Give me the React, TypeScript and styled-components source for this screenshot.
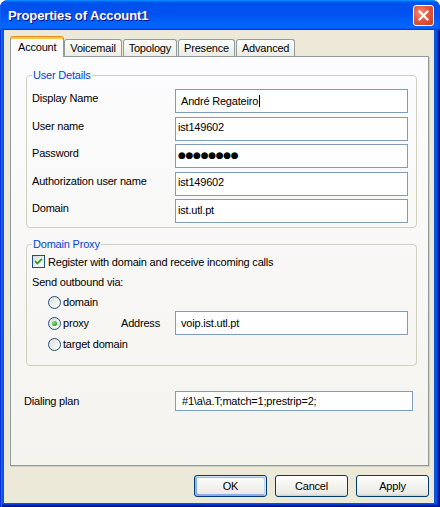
import React from 'react';
import styled, { createGlobalStyle } from 'styled-components';

const GlobalStyle = createGlobalStyle`
  html, body { margin: 0; padding: 0; }
  body {
    width: 440px;
    height: 507px;
    overflow: hidden;
    font-family: Tahoma, "Liberation Sans", Arial, sans-serif;
    font-size: 11px;
    letter-spacing: -0.2px;
    color: #000;
  }
  * { box-sizing: border-box; }
`;

const Window = styled.div`
  width: 440px;
  height: 507px;
  display: flex;
  flex-direction: column;
  background: #0855dd;
  border-radius: 8px 8px 0 0;
  overflow: hidden;
`;

const TitleBar = styled.div`
  height: 30px;
  flex: none;
  display: flex;
  align-items: center;
  justify-content: space-between;
  padding: 1px 6px 0 8px;
  background: linear-gradient(180deg, #0997ff, #0053ee 8%, #0050ee 40%, #0066ff 88%, #0066ff 93%, #005bff 95%, #003dd7 96%, #003dd7);
  box-shadow: inset 1px 0 #0b62f4, inset -1px 0 #0b4fd8;
`;

const Title = styled.span`
  color: #fff;
  font: bold 13px "Liberation Sans", Arial, sans-serif;
  letter-spacing: -0.1px;
  text-shadow: 1px 1px #0f1089;
`;

const CloseButton = styled.div`
  width: 21px;
  height: 21px;
  border: 1px solid #fff;
  border-radius: 3px;
  display: flex;
  align-items: center;
  justify-content: center;
  background: radial-gradient(circle at 35% 35%, #f0917a 0%, #e05a3c 45%, #d4472a 80%, #c03a1c 100%);
`;

const Frame = styled.div`
  flex: 1;
  display: flex;
  padding: 0 6px 4px 4px;
  background: #0855dd;
  box-shadow: inset 1px 0 #0831d9, inset 2px 0 #166aee, inset -1px -1px #00138c,
    inset -2px -2px #001ea0, inset -3px -3px #003bda;
`;

const Client = styled.div`
  flex: 1;
  display: flex;
  flex-direction: column;
  padding: 6px 5px 6px 6px;
  background: #ece9d8;
`;

const TabStrip = styled.div`
  display: flex;
  align-items: flex-end;
  gap: 1px;
  height: 21px;
  margin-bottom: -1px;
  position: relative;
  z-index: 1;
`;

const Tab = styled.div<{ $active?: boolean }>`
  display: flex;
  align-items: center;
  border: 1px solid #919b9c;
  border-bottom: none;
  border-radius: 3px 3px 0 0;
  white-space: nowrap;
  height: ${p => (p.$active ? '21px' : '17px')};
  margin-bottom: ${p => (p.$active ? '0' : '1px')};
  margin-right: ${p => (p.$active ? '-1px' : '0')};
  padding: ${p => (p.$active ? '0 7px 1px' : '0 5px')};
  border-top-color: ${p => (p.$active ? '#e68b2c' : '#919b9c')};
  background: ${p => (p.$active ? '#fcfcfe' : 'linear-gradient(180deg, #ffffff, #f3f3ef 60%, #ecebe5)')};
  box-shadow: ${p => (p.$active ? 'inset 0 2px #ffc73c' : 'none')};
`;

const Panel = styled.div`
  flex: 1;
  display: flex;
  flex-direction: column;
  padding: 12px 11px 0 13px;
  border: 1px solid #919b9c;
  background: linear-gradient(180deg, #fcfcfe, #f4f3ee);
  box-shadow: 1px 1px 0 #d0cebf;
`;

const GroupBox = styled.fieldset<{ $top?: number }>`
  margin: ${p => p.$top ?? 0}px 0 0 2px;
  padding: 0 8px 4px 5px;
  border: 1px solid #d0d0bf;
  border-radius: 4px;
  min-width: 0;
`;

const Legend = styled.legend`
  color: #0046d5;
  padding: 0 1px;
  line-height: 13px;
`;

const FieldGrid = styled.div`
  display: grid;
  grid-template-columns: 143px 1fr;
  grid-auto-rows: 24px;
  row-gap: 3.5px;
  padding-top: 7px;
`;

const FieldLabel = styled.div`
  line-height: 13px;
  padding-top: 3px;
`;

const TextBox = styled.div<{ $compact?: boolean; $h?: number }>`
  height: ${p => p.$h ?? 24}px;
  display: flex;
  align-items: center;
  border: 1px solid #7f9db9;
  background: #fff;
  white-space: nowrap;
  padding: ${p => (p.$compact ? '0 0 3px 2px' : '0 0 0 5px')};
`;

const Caret = styled.span`
  display: inline-block;
  width: 1px;
  height: 12px;
  margin-left: 1px;
  background: #000;
`;

const Dots = styled.span`
  font-family: "DejaVu Sans", sans-serif;
  font-size: 9px;
  letter-spacing: -0.3px;
  line-height: 10px;
`;

const ProxyBody = styled.div`
  display: flex;
  flex-direction: column;
  padding: 4px 0 9px;
`;

const CheckRow = styled.div`
  display: flex;
  align-items: center;
  gap: 3px;
  height: 13px;
`;

const CheckBox = styled.div`
  width: 13px;
  height: 13px;
  flex: none;
  border: 1px solid #1c5180;
  background: linear-gradient(135deg, #dcdcd7, #ffffff);
  display: flex;
  align-items: center;
  justify-content: center;
`;

const SubLabel = styled.div`
  margin-top: 8px;
  line-height: 13px;
`;

const RadioGrid = styled.div`
  display: grid;
  grid-template-columns: 73px 54px 1fr;
  grid-template-rows: 16px 24px 16px;
  row-gap: 1px;
  margin: 5px 0 0 16px;
  align-items: center;
`;

const RadioOption = styled.div<{ $row: number }>`
  grid-column: 1;
  grid-row: ${p => p.$row};
  display: flex;
  align-items: center;
  gap: 2px;
  white-space: nowrap;
`;

const RadioCircle = styled.div<{ $checked?: boolean }>`
  width: 13px;
  height: 13px;
  flex: none;
  border: 1px solid #1c5180;
  border-radius: 50%;
  display: flex;
  align-items: center;
  justify-content: center;
  background: linear-gradient(135deg, #dcdcd7, #ffffff);
  &::after {
    content: '';
    display: ${p => (p.$checked ? 'block' : 'none')};
    width: 5px;
    height: 5px;
    border-radius: 50%;
    background: radial-gradient(circle at 35% 35%, #8ee88a, #21a121 70%);
  }
`;

const AddressLabel = styled.div`
  grid-column: 2;
  grid-row: 2;
`;

const AddressBox = styled(TextBox)`
  grid-column: 3;
  grid-row: 2;
`;

const DialRow = styled.div`
  display: grid;
  grid-template-columns: 151px 1fr;
  align-items: center;
  margin: 25px 4px 0 0;
`;

const ButtonRow = styled.div`
  display: flex;
  justify-content: flex-end;
  gap: 8px;
  margin-top: 9px;
`;

const Button = styled.div<{ $default?: boolean }>`
  width: 73px;
  height: 22px;
  display: flex;
  align-items: center;
  justify-content: center;
  border: 1px solid #003c74;
  border-radius: 3px;
  background: linear-gradient(180deg, #ffffff, #f4f4f0 40%, #ecebe6 86%, #d6d0c5);
  box-shadow: ${p =>
    p.$default
      ? 'inset -1px 1px #cee7ff, inset 1px 2px #98b8ea, inset -2px 2px #bcd4f6, inset 1px -1px #89ade4, inset 2px -2px #89ade4'
      : 'none'};
`;

const userFields = [
  { label: 'User name', value: 'ist149602' },
  { label: 'Password', value: null },
  { label: 'Authorization user name', value: 'ist149602' },
  { label: 'Domain', value: 'ist.utl.pt' },
];

const tabs = ['Account', 'Voicemail', 'Topology', 'Presence', 'Advanced'];

export default function App() {
  return (
    <>
      <GlobalStyle />
      <Window>
        <TitleBar>
          <Title>Properties of Account1</Title>
          <CloseButton>
            <svg width="11" height="11" viewBox="0 0 11 11">
              <path d="M1.5 1.5 L9.5 9.5 M9.5 1.5 L1.5 9.5" stroke="#fff" strokeWidth="2.2" strokeLinecap="square" />
            </svg>
          </CloseButton>
        </TitleBar>
        <Frame>
          <Client>
            <TabStrip>
              {tabs.map((t, i) => (
                <Tab key={t} $active={i === 0}>{t}</Tab>
              ))}
            </TabStrip>
            <Panel>
              <GroupBox>
                <Legend>User Details</Legend>
                <FieldGrid>
                  <FieldLabel>Display Name</FieldLabel>
                  <TextBox>André Regateiro<Caret /></TextBox>
                  {userFields.map(f => (
                    <React.Fragment key={f.label}>
                      <FieldLabel>{f.label}</FieldLabel>
                      <TextBox $compact>
                        {f.value ?? <Dots>●●●●●●●●</Dots>}
                      </TextBox>
                    </React.Fragment>
                  ))}
                </FieldGrid>
              </GroupBox>

              <GroupBox $top={10}>
                <Legend>Domain Proxy</Legend>
                <ProxyBody>
                  <CheckRow>
                    <CheckBox>
                      <svg width="9" height="9" viewBox="0 0 9 9">
                        <path d="M1 4 L3.3 6.5 L8 1.8" fill="none" stroke="#21a121" strokeWidth="1.8" />
                      </svg>
                    </CheckBox>
                    Register with domain and receive incoming calls
                  </CheckRow>
                  <SubLabel>Send outbound via:</SubLabel>
                  <RadioGrid>
                    <RadioOption $row={1}><RadioCircle />domain</RadioOption>
                    <RadioOption $row={2}><RadioCircle $checked />proxy</RadioOption>
                    <RadioOption $row={3}><RadioCircle />target domain</RadioOption>
                    <AddressLabel>Address</AddressLabel>
                    <AddressBox>voip.ist.utl.pt</AddressBox>
                  </RadioGrid>
                </ProxyBody>
              </GroupBox>

              <DialRow>
                <div>Dialing plan</div>
                <TextBox $h={20} style={{ paddingLeft: 6 }}>#1\a\a.T;match=1;prestrip=2;</TextBox>
              </DialRow>
            </Panel>
            <ButtonRow>
              <Button $default>OK</Button>
              <Button>Cancel</Button>
              <Button>Apply</Button>
            </ButtonRow>
          </Client>
        </Frame>
      </Window>
    </>
  );
}
